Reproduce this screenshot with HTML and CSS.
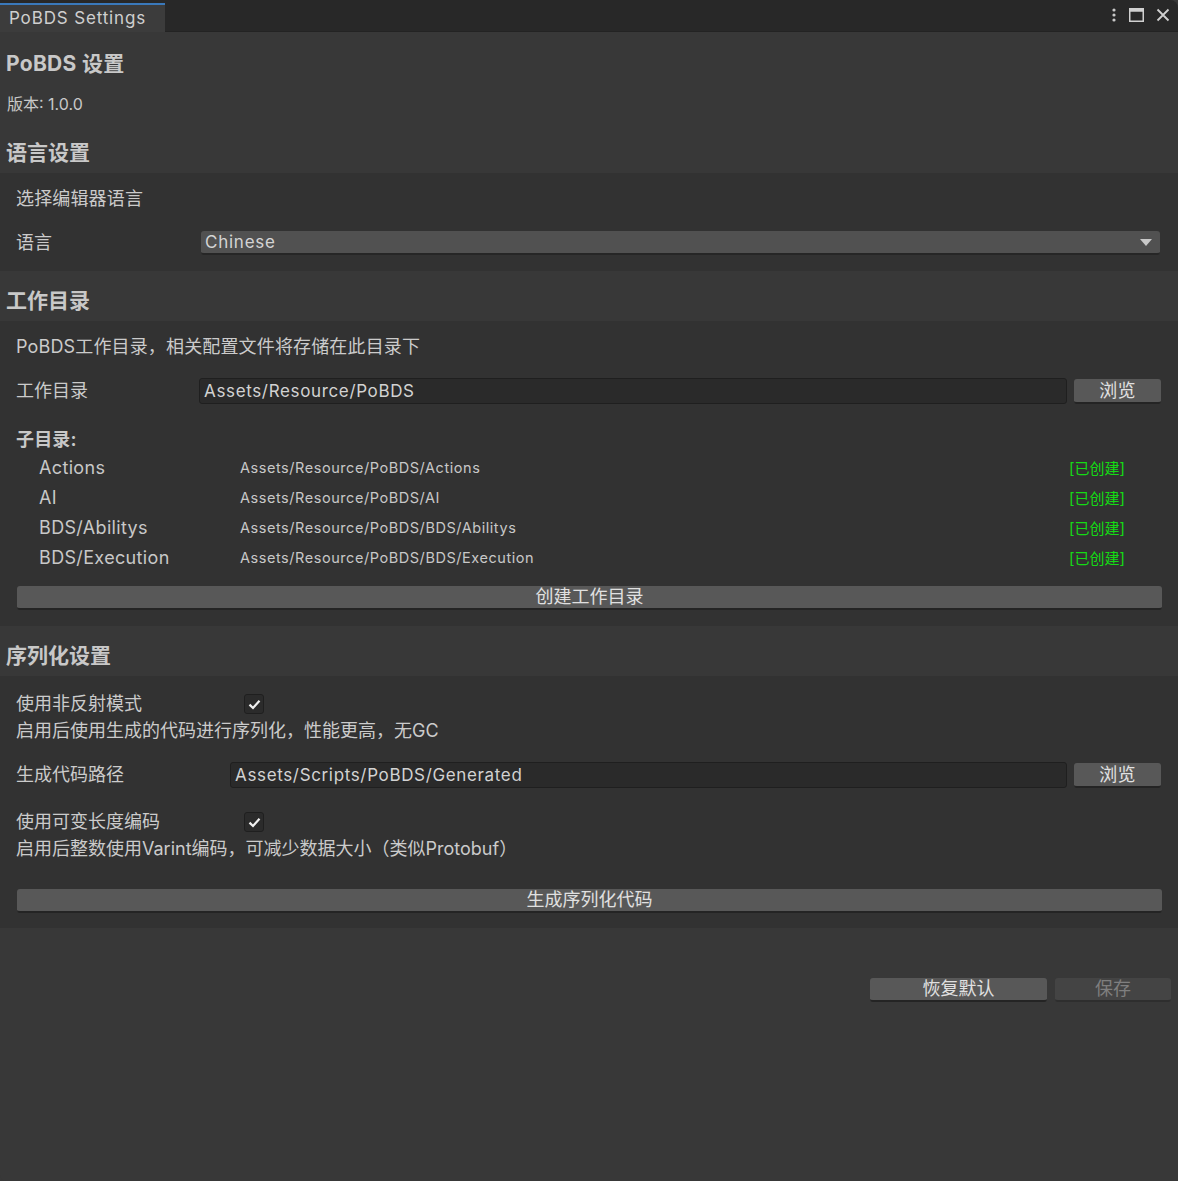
FILE: index.html
```html
<!DOCTYPE html>
<html lang="zh">
<head>
<meta charset="utf-8">
<title>PoBDS Settings</title>
<link rel="stylesheet" href="styles.css">
</head>
<body>
<div class="window">
  <div class="tabbar">
    <div class="tab">PoBDS Settings</div>
    <div class="tab-tools">
      <svg class="ico" width="6" height="16" viewBox="0 0 6 16"><circle cx="3" cy="3" r="1.6" fill="#c8c8c8"/><circle cx="3" cy="8" r="1.6" fill="#c8c8c8"/><circle cx="3" cy="13" r="1.6" fill="#c8c8c8"/></svg>
      <svg class="ico" width="15" height="14" viewBox="0 0 15 14"><rect x="0.75" y="0.75" width="13.5" height="12.5" fill="none" stroke="#d0d0d0" stroke-width="1.5"/><rect x="0.75" y="0.75" width="13.5" height="3" fill="#d0d0d0"/></svg>
      <svg class="ico" width="14" height="14" viewBox="0 0 14 14"><path d="M1.5 1.5 L12.5 12.5 M12.5 1.5 L1.5 12.5" stroke="#d0d0d0" stroke-width="1.8"/></svg>
    </div>
  </div>

  <div class="content">
    <div class="title">PoBDS 设置</div>
    <div class="version">版本: 1.0.0</div>

    <div class="header header-first">语言设置</div>
    <div class="box box-lang">
      <div class="row">选择编辑器语言</div>
      <div class="row row-field">
        <div class="label lw1">语言</div>
        <div class="dropdown"><span>Chinese</span><span class="arrow"></span></div>
      </div>
    </div>

    <div class="header">工作目录</div>
    <div class="box box-dir">
      <div class="row">PoBDS工作目录，相关配置文件将存储在此目录下</div>
      <div class="row row-field mt19">
        <div class="label lw0">工作目录</div>
        <div class="field">Assets/Resource/PoBDS</div>
        <div class="btn btn-browse">浏览</div>
      </div>
      <div class="row sub-title">子目录:</div>
      <div class="subs">
        <div class="sub"><span class="sub-name">Actions</span><span class="sub-path">Assets/Resource/PoBDS/Actions</span><span class="sub-state">[已创建]</span></div>
        <div class="sub"><span class="sub-name">AI</span><span class="sub-path">Assets/Resource/PoBDS/AI</span><span class="sub-state">[已创建]</span></div>
        <div class="sub"><span class="sub-name">BDS/Abilitys</span><span class="sub-path">Assets/Resource/PoBDS/BDS/Abilitys</span><span class="sub-state">[已创建]</span></div>
        <div class="sub"><span class="sub-name">BDS/Execution</span><span class="sub-path">Assets/Resource/PoBDS/BDS/Execution</span><span class="sub-state">[已创建]</span></div>
      </div>
      <div class="btn btn-wide btn-create">创建工作目录</div>
    </div>

    <div class="header">序列化设置</div>
    <div class="box box-ser">
      <div class="row">
        <div class="label lw2">使用非反射模式</div>
        <div class="check"><svg width="13" height="11" viewBox="0 0 13 11"><path d="M1.5 5.6 L5 9 L11.5 1.8" fill="none" stroke="#f0f0f0" stroke-width="2.2"/></svg></div>
      </div>
      <div class="row desc mt3">启用后使用生成的代码进行序列化，性能更高，无GC</div>
      <div class="row row-field mt19">
        <div class="label lw3">生成代码路径</div>
        <div class="field">Assets/Scripts/PoBDS/Generated</div>
        <div class="btn btn-browse">浏览</div>
      </div>
      <div class="row mt22">
        <div class="label lw2">使用可变长度编码</div>
        <div class="check"><svg width="13" height="11" viewBox="0 0 13 11"><path d="M1.5 5.6 L5 9 L11.5 1.8" fill="none" stroke="#f0f0f0" stroke-width="2.2"/></svg></div>
      </div>
      <div class="row desc mt3">启用后整数使用Varint编码，可减少数据大小（类似Protobuf）</div>
      <div class="btn btn-wide btn-gen">生成序列化代码</div>
    </div>

    <div class="footer">
      <div class="btn btn-reset">恢复默认</div>
      <div class="btn btn-save">保存</div>
    </div>
  </div>
</div>
</body>
</html>
```

FILE: styles.css
```css
* { box-sizing: border-box; }
html, body {
  margin: 0;
  padding: 0;
  background: #383838;
}
body {
  font-family: "Inter", "Noto Sans CJK SC", sans-serif;
  color: #c8c8c8;
  width: 1178px;
  height: 1181px;
  overflow: hidden;
}
.window {
  width: 1178px;
  height: 1181px;
  background: #383838;
  border-bottom-left-radius: 6px;
  display: flex;
  flex-direction: column;
}
.tabbar {
  height: 32px;
  background: #282828;
  border-bottom: 1px solid #232323;
  display: flex;
  align-items: flex-end;
  justify-content: space-between;
  border-top-right-radius: 8px;
}
.tab {
  width: 165px;
  height: 29px;
  background: #3c3c3c;
  border-top: 2px solid #3a79bb;
  font-size: 17px;
  padding-left: 9px;
  line-height: 27px;
  color: #cfcfcf;
  letter-spacing: 0.85px;
  margin-bottom: -1px;
}
.tab-tools {
  display: flex;
  align-items: center;
  gap: 12px;
  height: 30px;
  padding-right: 8px;
  padding-bottom: 2px;
}
.tab-tools .ico { display: block; }
.content {
  display: flex;
  flex-direction: column;
}
.title {
  font-size: 21px;
  font-weight: 700;
  padding-left: 6px;
  height: 26px;
  line-height: 26px;
  margin-top: 19px;
  color: #c8c8c8;
  letter-spacing: 0.3px;
}
.version {
  font-size: 16px;
  padding-left: 7px;
  margin-top: 15px;
  height: 24px;
  line-height: 24px;
  color: #c8c8c8;
  letter-spacing: 0;
}
.header {
  font-size: 21px;
  font-weight: 700;
  padding-left: 6px;
  height: 50px;
  padding-top: 18px;
  line-height: 24px;
  color: #c8c8c8;
}
.header-first { height: 57px; padding-top: 25px; }
.box {
  background: #323232;
  padding: 14px 17px 15px 16px;
  display: flex;
  flex-direction: column;
}
.row {
  font-size: 18px;
  height: 24px;
  line-height: 24px;
  display: flex;
  align-items: center;
  color: #cbcbcb;
  letter-spacing: 0.15px;
}
.row.desc { letter-spacing: 0; }
.row-field { height: 26px; margin-top: 19px; }
.mt19 { margin-top: 19px; }
.mt22 { margin-top: 22px; }
.mt3 { margin-top: 3px; }
.label { flex: none; letter-spacing: 0; }
.lw0 { width: 183px; }
.lw1 { width: 185px; }
.lw2 { width: 228px; }
.lw3 { width: 214px; }
.dropdown {
  flex: 1;
  height: 24px;
  margin-right: 1px;
  background: #515151;
  border-radius: 3px;
  border-bottom: 2px solid #262626;
  display: flex;
  align-items: center;
  justify-content: space-between;
  padding: 0 8px 0 4px;
  font-size: 17px;
  color: #d4d4d4;
  letter-spacing: 0.75px;
}
.arrow {
  width: 0;
  height: 0;
  border-left: 6px solid transparent;
  border-right: 6px solid transparent;
  border-top: 7px solid #c8c8c8;
}
.field {
  flex: 1;
  height: 26px;
  background: #2a2a2a;
  border: 1px solid #1f1f1f;
  border-radius: 3px;
  padding-left: 4px;
  line-height: 24px;
  font-size: 17px;
  color: #d2d2d2;
  letter-spacing: 0.65px;
}
.btn {
  background: #585858;
  border-radius: 3px;
  border-bottom: 2px solid #242424;
  color: #e0e0e0;
  font-size: 18px;
  text-align: center;
  line-height: 22px;
  height: 24px;
}
.btn-browse {
  width: 87px;
  margin-left: 7px;
  flex: none;
  height: 25px;
  line-height: 24px;
}
.sub-title {
  margin-top: 24px;
  font-weight: 700;
  font-size: 18px;
  color: #c8c8c8;
}
.subs {
  margin-top: 0;
  display: flex;
  flex-direction: column;
}
.sub {
  height: 30px;
  display: flex;
  align-items: center;
  padding-left: 23px;
}
.sub-name {
  width: 201px;
  font-size: 18px;
  color: #c8c8c8;
  letter-spacing: 0.35px;
}
.sub-path {
  flex: 1;
  font-size: 14.5px;
  color: #c8c8c8;
  letter-spacing: 0.55px;
}
.sub-state {
  width: 92px;
  font-size: 15px;
  color: #14dc14;
}
.btn-wide {
  width: 1145px;
  margin-left: 1px;
}
.btn-create { margin-top: 14px; }
.btn-gen { margin-top: 28px; }
.box-dir { padding-bottom: 16px; }
.check {
  width: 20px;
  height: 20px;
  background: #2b2b2b;
  border: 1px solid #1f1f1f;
  border-radius: 3px;
  display: flex;
  align-items: center;
  justify-content: center;
}
.check svg { display: block; }
.box-ser { padding-top: 16px; }
.footer {
  display: flex;
  justify-content: flex-end;
  gap: 8px;
  margin-top: 50px;
  padding-right: 7px;
}
.btn-reset { width: 177px; }
.btn-save {
  width: 116px;
  background: #444444;
  border-bottom-color: #2e2e2e;
  color: #7f7f7f;
}
```
